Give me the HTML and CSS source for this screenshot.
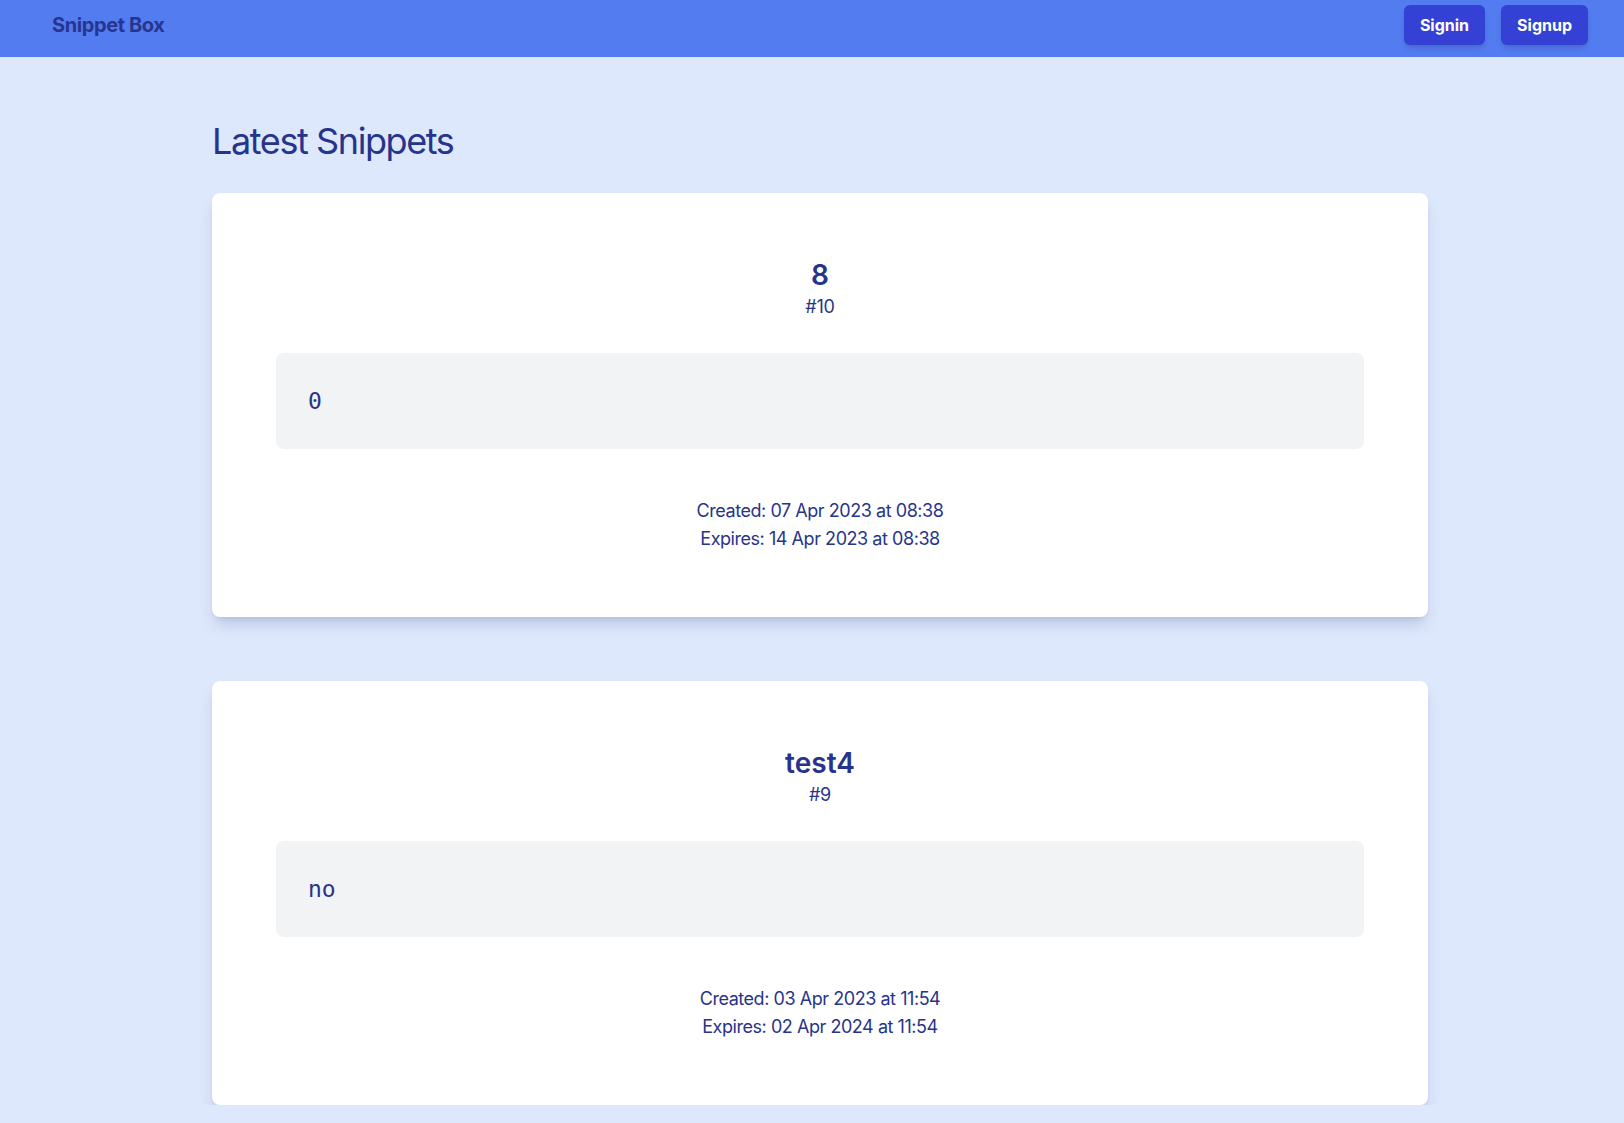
FILE: index.html
```html
<!DOCTYPE html>
<html lang="en">
<head>
<meta charset="utf-8">
<title>Snippet Box</title>
<link rel="stylesheet" href="styles.css">
</head>
<body>
<header class="navbar">
  <a class="brand" href="#">Snippet Box</a>
  <nav class="nav-actions">
    <a class="btn" href="#">Signin</a>
    <a class="btn" href="#">Signup</a>
  </nav>
</header>
<main class="content">
  <h1 class="page-title">Latest Snippets</h1>
  <section class="snippets">
    <article class="card">
      <h2 class="card-title">8</h2>
      <p class="card-id">#10</p>
      <pre class="code">0</pre>
      <div class="meta">
        <p>Created: 07 Apr 2023 at 08:38</p>
        <p>Expires: 14 Apr 2023 at 08:38</p>
      </div>
    </article>
    <article class="card">
      <h2 class="card-title">test4</h2>
      <p class="card-id">#9</p>
      <pre class="code">no</pre>
      <div class="meta">
        <p>Created: 03 Apr 2023 at 11:54</p>
        <p>Expires: 02 Apr 2024 at 11:54</p>
      </div>
    </article>
  </section>
</main>
</body>
</html>
```
FILE: styles.css
```css
* { box-sizing: border-box; }
html, body { margin: 0; padding: 0; }
body {
  background: #dee8fc;
  font-family: Inter, "Liberation Sans", sans-serif;
  color: #27348b;
}
.navbar {
  height: 57px;
  background: #527cf0;
  display: flex;
  align-items: flex-start;
  justify-content: space-between;
  padding: 5px 36px 0 52px;
}
.brand {
  height: 40px;
  display: flex;
  align-items: center;
  font-size: 20px;
  line-height: 28px;
  font-weight: 700;
  color: #28358f;
  text-decoration: none;
  letter-spacing: -0.4px;
}
.nav-actions {
  display: flex;
  gap: 16px;
}
.btn {
  height: 40px;
  padding: 0 16px;
  display: flex;
  align-items: center;
  background: #3441d4;
  color: #ffffff;
  font-weight: 700;
  font-size: 16px;
  text-decoration: none;
  border-radius: 6px;
  box-shadow: 0 4px 6px -1px rgba(0,0,0,0.12), 0 2px 4px -2px rgba(0,0,0,0.1);
}
.content {
  padding: 64px 0 0 212px;
  width: 1428px;
}
.page-title {
  margin: 0 0 32px;
  font-size: 36px;
  line-height: 40px;
  font-weight: 400;
  color: #27348b;
  letter-spacing: -1.4px;
}
.snippets {
  display: flex;
  flex-direction: column;
  gap: 64px;
}
.card {
  background: #ffffff;
  border-radius: 8px;
  padding: 64px;
  height: 424px;
  box-shadow: 0 10px 15px -3px rgba(30,50,110,0.18), 0 4px 6px -4px rgba(30,50,110,0.12);
  text-align: center;
}
.card-title {
  margin: 0;
  font-size: 28px;
  line-height: 36px;
  font-weight: 600;
}
.card-id {
  margin: 0;
  font-size: 18px;
  line-height: 28px;
  letter-spacing: -0.2px;
}
.code {
  margin: 32px 0 48px;
  text-align: left;
  background: #f2f3f5;
  border-radius: 8px;
  padding: 32px;
  font-family: "DejaVu Sans Mono", "Liberation Mono", monospace;
  font-size: 23px;
  line-height: 32px;
  color: #27348b;
}
.meta p {
  margin: 0;
  font-size: 18px;
  line-height: 28px;
  letter-spacing: -0.45px;
}
```
